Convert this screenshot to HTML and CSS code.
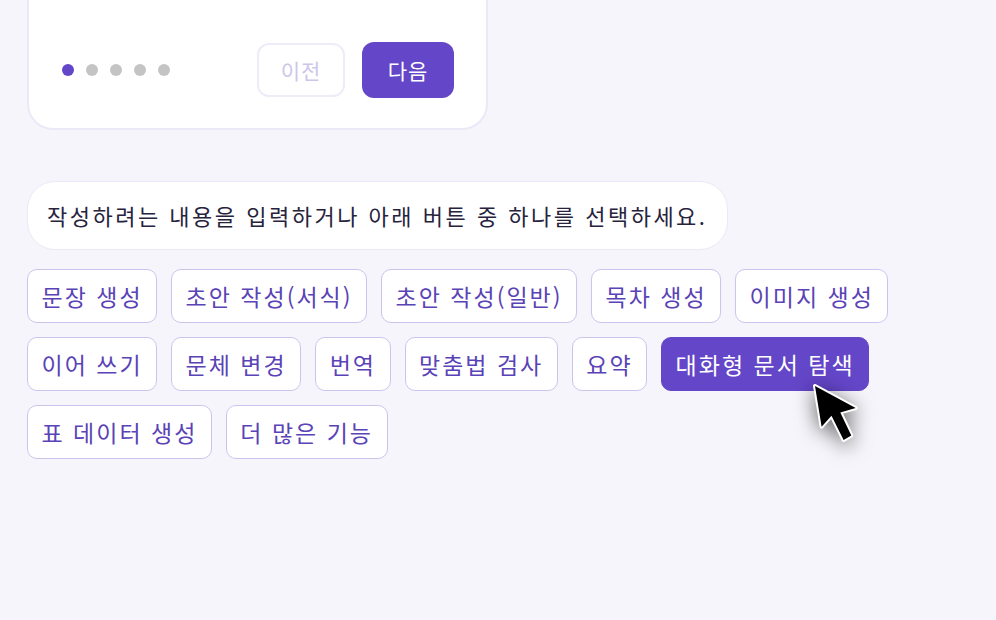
FILE: index.html
```html
<!DOCTYPE html>
<html lang="ko">
<head>
  <meta charset="UTF-8">
  <meta name="viewport" content="width=device-width, initial-scale=1.0">
  <title>문서 도우미</title>
  <link rel="stylesheet" href="styles.css">
</head>
<body>

  <div class="chat">
    <div class="guide-card">
      <p class="guide-text">작성 중인 문서를 바탕으로 도와드릴 수 있는 기능</p>
      <div class="guide-footer">
        <div class="dots">
          <span class="dot active"></span>
          <span class="dot"></span>
          <span class="dot"></span>
          <span class="dot"></span>
          <span class="dot"></span>
        </div>
        <div class="guide-buttons">
          <button class="btn-prev" disabled>이전</button>
          <button class="btn-next">다음</button>
        </div>
      </div>
    </div>

    <div class="bubble">작성하려는 내용을 입력하거나 아래 버튼 중 하나를 선택하세요.</div>

    <div class="chips">
      <button class="chip">문장 생성</button>
      <button class="chip">초안 작성(서식)</button>
      <button class="chip">초안 작성(일반)</button>
      <button class="chip">목차 생성</button>
      <button class="chip">이미지 생성</button>
      <button class="chip">이어 쓰기</button>
      <button class="chip">문체 변경</button>
      <button class="chip">번역</button>
      <button class="chip">맞춤법 검사</button>
      <button class="chip">요약</button>
      <button class="chip chip-active">대화형 문서 탐색
        <svg class="cursor" width="70" height="80" viewBox="0 0 70 80">
          <polygon points="14,12 20.6,52.7 30.5,41.7 42.6,65.9 50.3,61.5 39.3,38.4 54.7,34"
                   fill="#000" stroke="#fff" stroke-width="4" stroke-linejoin="round" paint-order="stroke"/>
        </svg>
      </button>
      <button class="chip">표 데이터 생성</button>
      <button class="chip">더 많은 기능</button>
    </div>
  </div>

</body>
</html>
```

FILE: styles.css
```css
body {
  font-family: "Noto Sans CJK KR", "Noto Sans", sans-serif;
  background-color: #f6f5fb;
  margin: 0;
  height: 100vh;
  overflow: hidden;
}

.chat {
  padding-left: 27px;
  max-width: 900px;
}

.guide-card {
  width: 461px;
  box-sizing: border-box;
  margin-top: -25px;
  padding: 0 32px 30px 33px;
  background-color: #ffffff;
  border: 2px solid #ebe8f8;
  border-top: none;
  border-radius: 0 0 26px 26px;
}

.guide-text {
  margin: 0 0 37px;
  padding-left: 16px;
  font-size: 20px;
  line-height: 30px;
  letter-spacing: 2px;
  color: #555;
  white-space: nowrap;
  overflow: hidden;
}

.guide-footer {
  display: flex;
  justify-content: space-between;
  align-items: center;
}

.dots {
  display: flex;
  gap: 12px;
}

.dot {
  width: 12px;
  height: 12px;
  border-radius: 50%;
  background-color: #c4c4c4;
}

.dot.active {
  background-color: #6446c8;
}

.guide-buttons {
  display: flex;
  align-items: center;
  gap: 17px;
}

.guide-buttons button {
  font-family: inherit;
  font-size: 21px;
  letter-spacing: 1px;
  border-radius: 12px;
  cursor: pointer;
}

.btn-prev {
  width: 88px;
  height: 54px;
  background-color: #ffffff;
  border: 2px solid #efecfa;
  color: #cdc6ea;
}

.btn-next {
  width: 92px;
  height: 56px;
  background-color: #6446c8;
  border: none;
  color: #ffffff;
}

.bubble {
  display: inline-block;
  margin-top: 51px;
  height: 69px;
  box-sizing: border-box;
  padding: 0 19px;
  line-height: 67px;
  background-color: #ffffff;
  border: 1px solid #ebe8f7;
  border-radius: 28px;
  font-size: 22px;
  letter-spacing: 2.5px;
  color: #27233d;
  white-space: nowrap;
}

.chips {
  display: flex;
  flex-wrap: wrap;
  gap: 14px;
  margin-top: 19px;
}

.chip {
  position: relative;
  height: 54px;
  padding: 0 13.5px;
  background-color: #ffffff;
  border: 1.5px solid #cdc4ee;
  border-radius: 10px;
  font-family: inherit;
  font-size: 23px;
  letter-spacing: 2px;
  color: #5a43b6;
  cursor: pointer;
  white-space: nowrap;
}

.chip-active {
  background-color: #6446c8;
  border-color: #6446c8;
  color: #ffffff;
}

.cursor {
  position: absolute;
  left: 139px;
  top: 36px;
  filter: drop-shadow(0 4px 10px rgba(0, 0, 0, 0.6));
  pointer-events: none;
}
```
